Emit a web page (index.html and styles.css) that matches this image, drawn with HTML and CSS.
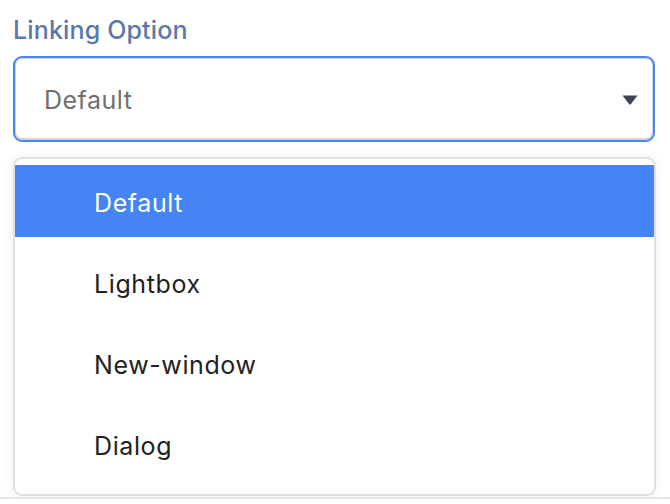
FILE: index.html
```html
<!DOCTYPE html>
<html>
<head>
<meta charset="utf-8">
<link rel="stylesheet" href="styles.css">
</head>
<body>
<div class="page">
  <div class="label">Linking Option</div>
  <div class="select">
    <span class="value">Default</span>
    <svg class="caret" width="16" height="10" viewBox="0 0 16 10"><path d="M0.5 0.5 H15.5 L9 9 Q8 10.2 7 9 Z" fill="#3e4458"/></svg>
  </div>
  <ul class="menu">
    <li class="item active">Default</li>
    <li class="item">Lightbox</li>
    <li class="item">New-window</li>
    <li class="item">Dialog</li>
  </ul>
</div>
<div class="bottom-line"></div>
</body>
</html>
```
FILE: styles.css
```css
html, body {
  margin: 0;
  padding: 0;
  background: #ffffff;
  height: 504px;
  overflow: hidden;
}
body {
  font-family: Inter, "Noto Sans", sans-serif;
  position: relative;
}
.page {
  padding: 16px 14px 0 13px;
}
.label {
  font-size: 25px;
  line-height: 28px;
  font-weight: 500;
  letter-spacing: 0.15px;
  color: #5b78ad;
  margin-bottom: 12px;
}
.select {
  box-sizing: border-box;
  height: 86px;
  width: 642px;
  border: 2px solid #4a86f2;
  border-radius: 9px;
  box-shadow: inset 0 0 0 1px #d3d4dc, inset 0 -1px 0 1px #d3d4dc;
  display: flex;
  align-items: center;
  justify-content: space-between;
  padding: 0 15px 0 29px;
}
.value {
  font-size: 25px;
  letter-spacing: 0.5px;
  color: #707070;
  padding-top: 1px;
}
.caret {
  display: block;
  margin-top: 1px;
}
.menu {
  list-style: none;
  margin: 15px 0 0 0;
  box-sizing: border-box;
  width: 643px;
  height: 339px;
  border: 2px solid #e0e0e0;
  border-radius: 9px;
  padding: 6px 0 0 0;
  box-shadow: 0 0 12px rgba(0, 0, 0, 0.07);
  overflow: hidden;
  background: #fff;
}
.item {
  box-sizing: border-box;
  height: 72px;
  margin-bottom: 9px;
  padding: 4px 0 0 79px;
  display: flex;
  align-items: center;
  font-size: 25px;
  letter-spacing: 0.6px;
  color: #222222;
}
.item.active {
  background: #4584f5;
  color: #ffffff;
}
.bottom-line {
  position: absolute;
  left: 0;
  right: 0;
  top: 497px;
  height: 2px;
  background: #e6e6e6;
}
```
